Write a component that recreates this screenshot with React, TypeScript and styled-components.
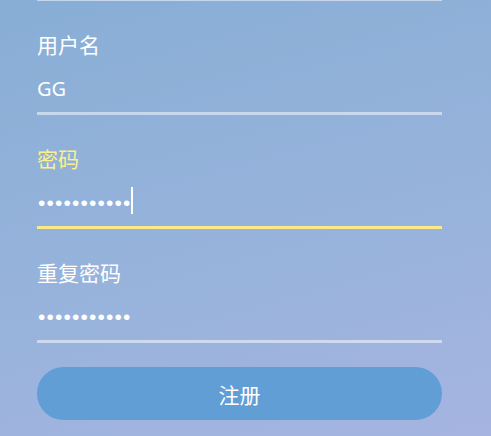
import styled, { createGlobalStyle } from "styled-components";

const GlobalStyle = createGlobalStyle`
  html, body {
    margin: 0;
    padding: 0;
  }
  body {
    font-family: "Noto Sans", "Noto Sans CJK SC", sans-serif;
  }
`;

const PageEl = styled.div`
  width: 100%;
  height: 436px;
  overflow: hidden;
  background: linear-gradient(165deg, #88aed5 0%, #97b3dc 55%, #a5b4e0 100%);
`;

const FormEl = styled.form`
  display: flex;
  flex-direction: column;
  width: 405px;
  margin: -2px 0 0 37px;
`;

const RuleEl = styled.div`
  height: 3px;
  background-color: rgba(255, 255, 255, 0.5);
`;

const FieldEl = styled.div<{ $active?: boolean }>`
  display: flex;
  flex-direction: column;
  padding-top: 28px;
  border-bottom: 3px solid
    ${(p) => (p.$active ? "#fbe886" : "rgba(255, 255, 255, 0.5)")};
`;

const LabelEl = styled.label<{ $active?: boolean }>`
  font-family: "Noto Sans CJK SC", sans-serif;
  font-size: 21px;
  line-height: 30px;
  color: ${(p) => (p.$active ? "#fbf08a" : "#ffffff")};
`;

const ValueEl = styled.div`
  display: flex;
  align-items: center;
  box-sizing: border-box;
  height: 53px;
  padding-top: 6px;
  color: #ffffff;
  font-size: 20px;
`;

const DotsEl = styled.span`
  font-family: "Liberation Sans", sans-serif;
  font-size: 21px;
  letter-spacing: 1.15px;
  padding-left: 1px;
`;

const CaretEl = styled.span`
  display: inline-block;
  width: 2px;
  height: 27px;
  margin-left: -1px;
  margin-top: -5px;
  background-color: #ffffff;
`;

const ButtonEl = styled.button`
  margin-top: 24px;
  height: 53px;
  border: none;
  border-radius: 27px;
  background-color: #629ed6;
  color: #ffffff;
  font-family: "Noto Sans CJK SC", sans-serif;
  font-size: 21px;
  cursor: pointer;
`;

const fields = [
  { id: "user", label: "用户名", value: "GG", secret: false, active: false },
  { id: "pass", label: "密码", value: "passwordxyz", secret: true, active: true },
  { id: "repeat", label: "重复密码", value: "passwordxyz", secret: true, active: false },
];

export default function App() {
  return (
    <>
      <GlobalStyle />
      <PageEl>
        <FormEl onSubmit={(e) => e.preventDefault()}>
          <RuleEl />
          {fields.map((f) => {
            return (
              <FieldEl key={f.id} $active={f.active}>
                <LabelEl $active={f.active}>{f.label}</LabelEl>
                <ValueEl>
                  {f.secret ? (
                    <DotsEl>{"•".repeat(f.value.length)}</DotsEl>
                  ) : (
                    <span>{f.value}</span>
                  )}
                  {f.active && <CaretEl />}
                </ValueEl>
              </FieldEl>
            );
          })}
          <ButtonEl type="submit">注册</ButtonEl>
        </FormEl>
      </PageEl>
    </>
  );
}
